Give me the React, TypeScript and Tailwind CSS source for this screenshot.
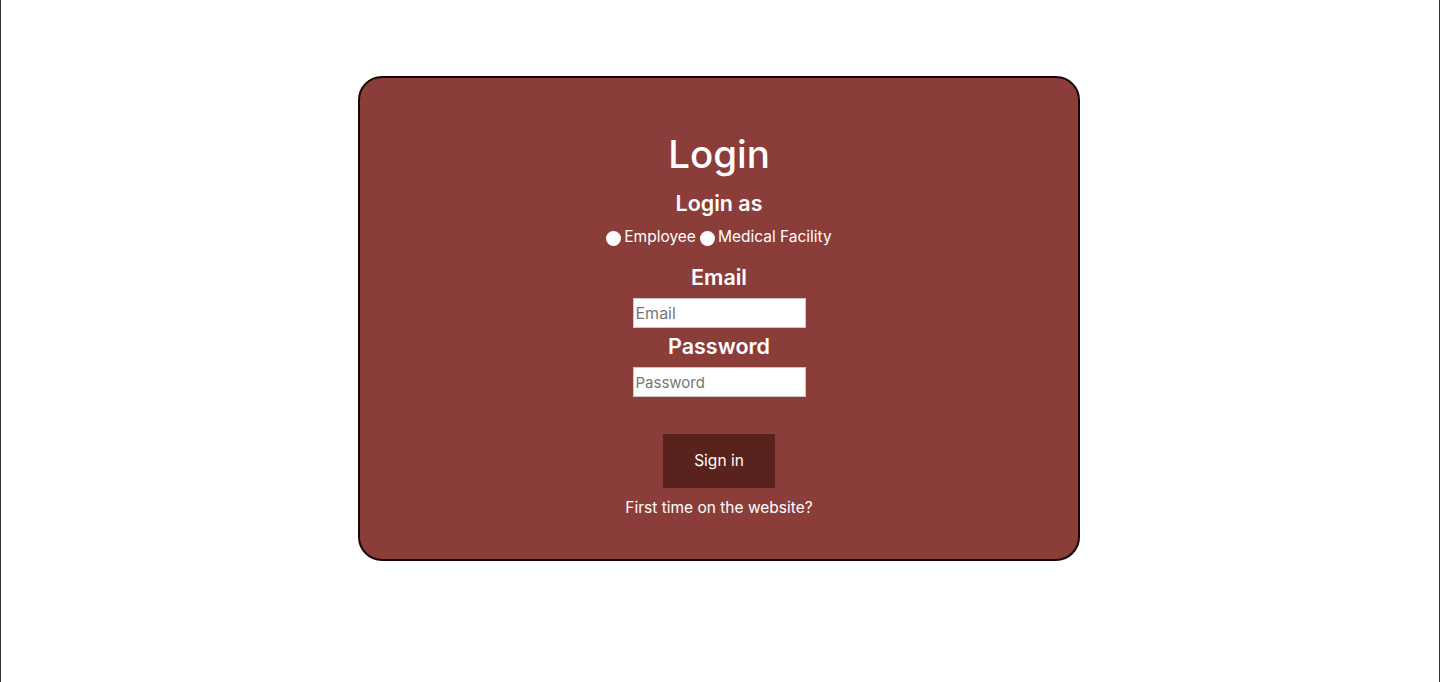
import React from 'react';

const App = () => {
  const [role, setRole] = React.useState('');

  return (
    <div className="min-h-screen bg-white border-x border-[#333] font-['Inter',sans-serif] text-white">
      <div className="flex justify-center pt-[76px] pr-[2px]">
        <div className="w-[722px] bg-[#8b3d3a] border-2 border-[#1a0605] rounded-[24px] flex flex-col items-center pt-[52px] pb-[41px]">
          {/* Header */}
          <h1 className="text-[38.5px] leading-[48px] font-medium">Login</h1>
          <h2 className="mt-[12px] text-[21.5px] leading-[26px] font-semibold">Login as</h2>

          {/* Role */}
          <div className="mt-[11px] flex items-center text-[15.5px] leading-[20px]">
            {['Employee', 'Medical Facility'].map((r) => (
              <label key={r} className="flex items-center mr-[4px] last:mr-0">
                <input
                  type="radio"
                  name="role"
                  checked={role === r}
                  onChange={() => setRole(r)}
                  className="appearance-none w-[15px] h-[15px] rounded-full bg-white mr-[3px] mt-[2px]"
                />
                {r}
              </label>
            ))}
          </div>

          {/* Form */}
          <label className="mt-[17px] text-[21.5px] leading-[26px] font-semibold">Email</label>
          <input
            type="email"
            placeholder="Email"
            className="mt-[8px] w-[173px] h-[30px] bg-white border border-[#c8c8c8] px-[2px] text-[16px] text-black placeholder:text-[#777] outline-none"
          />
          <label className="mt-[5px] text-[21.5px] leading-[26px] font-semibold">Password</label>
          <input
            type="password"
            placeholder="Password"
            className="mt-[8px] w-[173px] h-[30px] bg-white border border-[#c8c8c8] px-[2px] text-[15px] text-black placeholder:text-[#777] outline-none"
          />

          <button className="mt-[37px] w-[112px] h-[54px] bg-[#5a221d] text-[15.5px]">Sign in</button>
          <p className="mt-[10px] text-[15.5px] leading-[20px]">First time on the website?</p>
        </div>
      </div>
    </div>
  );
};

export default App;
